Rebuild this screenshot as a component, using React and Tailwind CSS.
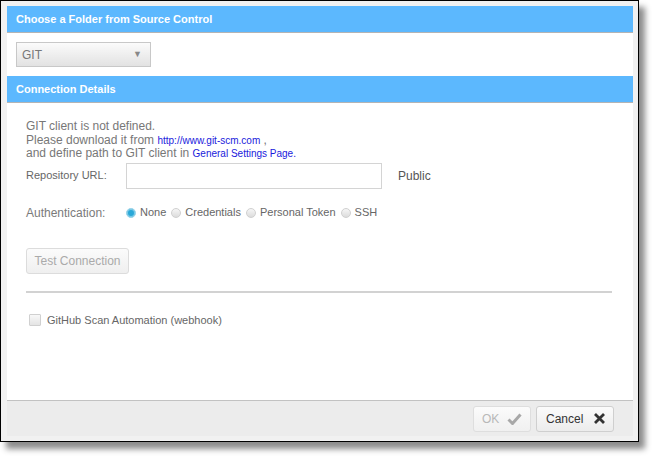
import React from "react";

const font = { fontFamily: '"Liberation Sans", Arial, sans-serif' };

function Header({ children }) {
  return (
    <div className="h-[27px] bg-[#5cb8fe] border-b border-[#b4b4b4] flex items-center pl-[9px] text-white font-bold text-[11px]">
      {children}
    </div>
  );
}

function Radio({ checked, label }) {
  return (
    <label className="flex items-center gap-[4px]">
      <span
        className={
          "w-[10px] h-[10px] rounded-full border " +
          (checked
            ? "bg-[#2aa8d8] border-[#9fd6ea] shadow-[inset_0_0_0_1px_#7fcbe7]"
            : "bg-gradient-to-b from-[#f6f6f6] to-[#dcdcdc] border-[#d0d0d0]")
        }
      />
      <span>{label}</span>
    </label>
  );
}

export default function App() {
  return (
    <div className="w-[659px] h-[462px] bg-white" style={font}>
      <div className="w-[639px] h-[442px] border border-black bg-[#f1f1f1] pt-[5px] pb-[5px] pl-[6px] pr-[5px] shadow-[6px_7px_6px_rgba(0,0,0,0.45)] flex flex-col">
        <div className="flex-1 bg-white flex flex-col">
          <Header>Choose a Folder from Source Control</Header>
          <div className="py-[9px] pl-[9px]">
            <div className="w-[135px] h-[25px] border border-[#c8c8c8] bg-gradient-to-b from-[#fbfbfb] to-[#e2e2e2] flex items-center justify-between pl-[5px] pr-[8px] text-[12px] text-[#777]">
              <span>GIT</span>
              <span className="text-[9px] text-[#888]">▼</span>
            </div>
          </div>
          <Header>Connection Details</Header>

          <div className="pl-[19px] pt-[17px] text-[12px] text-[#777]">
            <div className="leading-[13.5px]">
              <div>GIT client is not defined.</div>
              <div>
                Please download it from{" "}
                <span className="text-[10px] text-[#1a1adc]">http://www.git-scm.com</span> ,
              </div>
              <div>
                and define path to GIT client in{" "}
                <span className="text-[10px] text-[#1a1adc]">General Settings Page.</span>
              </div>
            </div>

            <div className="flex items-center mt-[2px] text-[11px] text-[#666]">
              <span className="w-[100px]">Repository URL:</span>
              <div className="w-[256px] h-[26px] border border-[#d4d4d4] bg-white" />
              <span className="ml-[16px] text-[12px] text-[#555]">Public</span>
            </div>

            <div className="flex items-center mt-[15px] text-[11px] text-[#666]">
              <span className="w-[100px] text-[12px] text-[#7a7a7a]">Authentication:</span>
              <div className="flex items-center gap-[5px]">
                <Radio checked label="None" />
                <Radio label="Credentials" />
                <Radio label="Personal Token" />
                <Radio label="SSH" />
              </div>
            </div>

            <div className="mt-[26px]">
              <div className="w-[103px] h-[26px] rounded-[3px] border border-[#dcdcdc] bg-gradient-to-b from-[#fbfbfb] to-[#efefef] flex items-center justify-center text-[12px] text-[#aaa]">
                Test Connection
              </div>
            </div>

            <div className="mt-[17px] mr-[21px] h-[2px] bg-[#d2d2d2]" />

            <label className="flex items-center mt-[19px] pl-[3px] text-[11px] text-[#666]">
              <span className="w-[12px] h-[12px] border border-[#d0d0d0] bg-gradient-to-b from-[#f8f8f8] to-[#e4e4e4] rounded-[1px]" />
              <span className="ml-[6px]">GitHub Scan Automation (webhook)</span>
            </label>
          </div>

          <div className="flex-1" />

          <div className="h-[36px] bg-[#ececec] border-t border-[#c2c2c2] flex items-center justify-end pr-[19px] gap-[5px]">
            <div className="w-[58px] h-[26px] rounded-[3px] border border-[#dedede] bg-gradient-to-b from-[#fbfbfb] to-[#f0f0f0] flex items-center justify-between px-[8px] text-[12px] text-[#b8b8b8]">
              <span>OK</span>
              <svg width="15" height="12" viewBox="0 0 15 12">
                <path d="M1.5 6.5 L5.5 10.5 L13.5 1.5" fill="none" stroke="#a8a8a8" strokeWidth="3" />
              </svg>
            </div>
            <div className="w-[78px] h-[26px] rounded-[3px] border border-[#cfcfcf] bg-gradient-to-b from-[#fbfbfb] to-[#ececec] flex items-center justify-between pl-[9px] pr-[7px] text-[12px] text-[#333]">
              <span>Cancel</span>
              <svg width="13" height="13" viewBox="0 0 13 13">
                <path d="M2 2 L11 11 M11 2 L2 11" fill="none" stroke="#333" strokeWidth="2.8" />
              </svg>
            </div>
          </div>
        </div>
      </div>
    </div>
  );
}
